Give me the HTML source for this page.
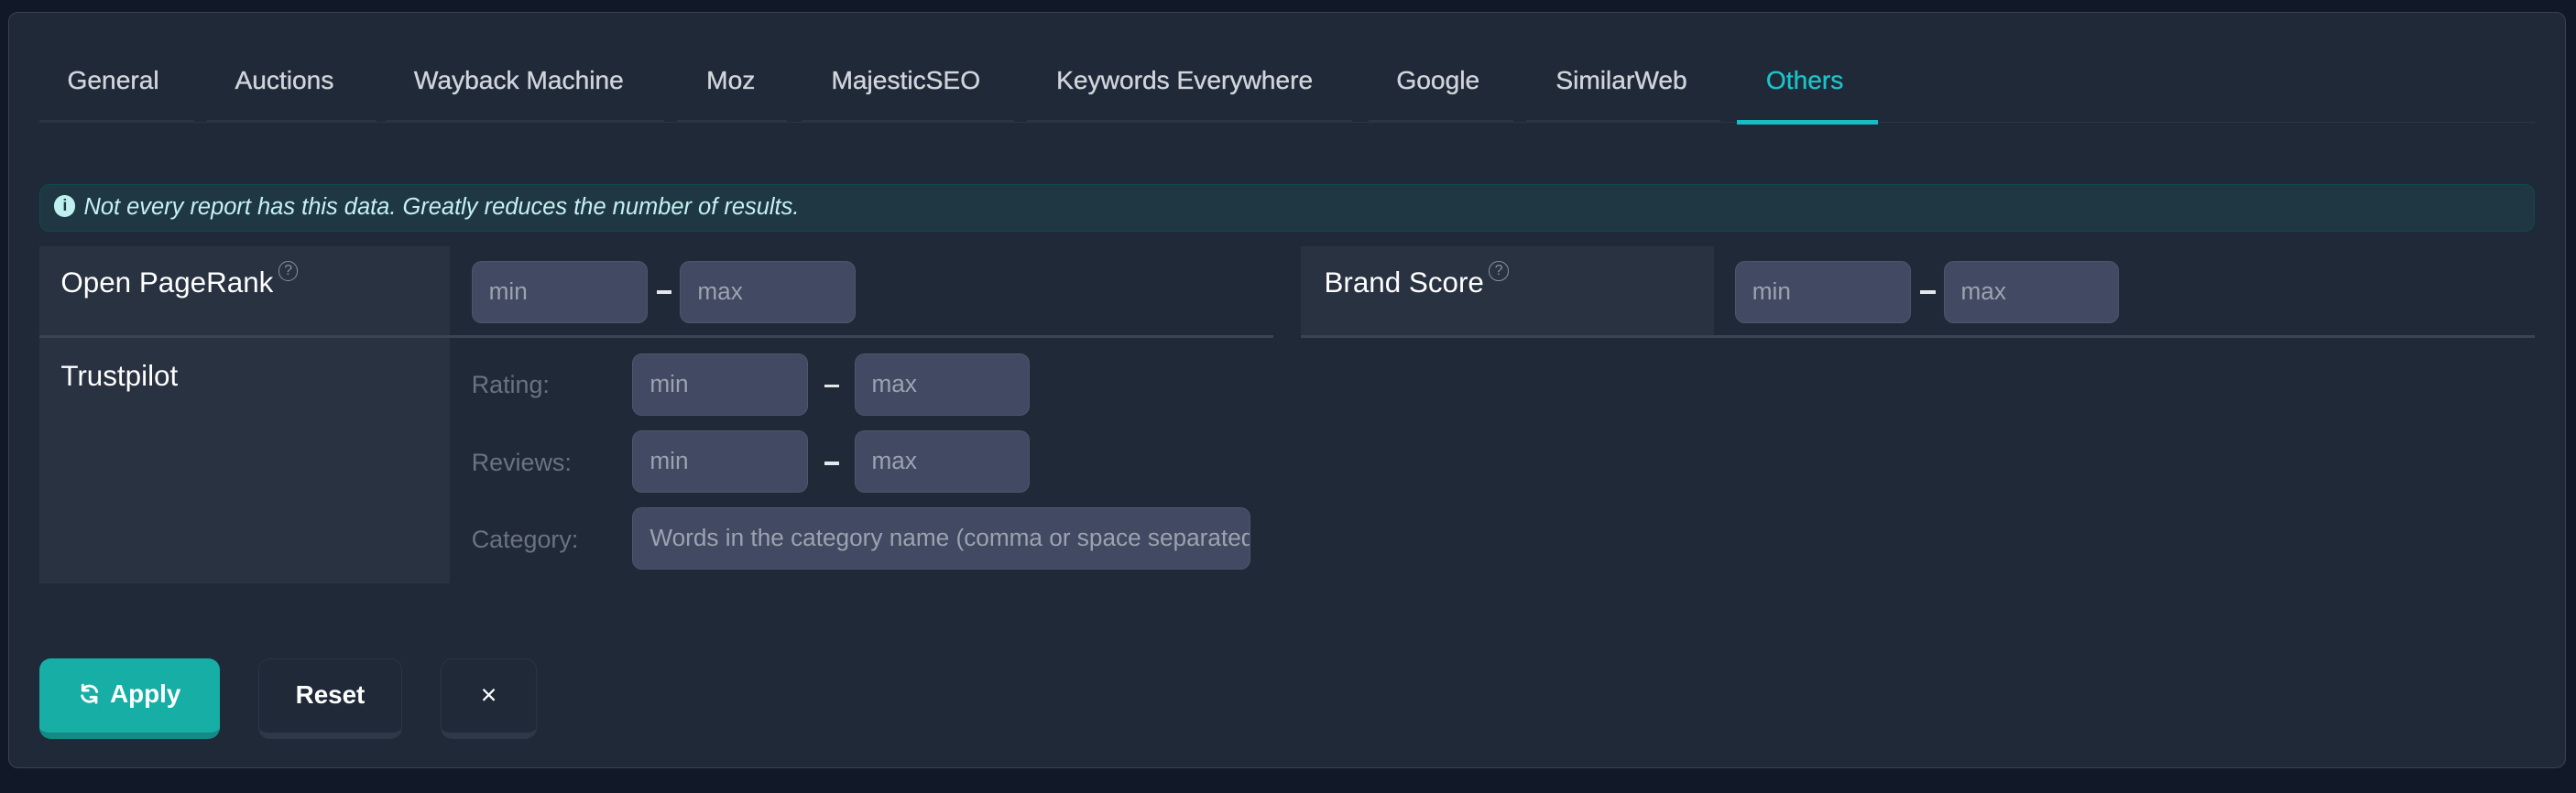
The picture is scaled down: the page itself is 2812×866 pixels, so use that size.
<!DOCTYPE html>
<html><head><meta charset="utf-8">
<style>
html,body{margin:0;padding:0;background:#111827;overflow:hidden}
body{zoom:1.7934;width:1568px;height:483px;position:relative;font-family:"Liberation Sans",sans-serif}
.a{position:absolute}
.panel{left:5px;top:7px;width:1557px;height:461px;background:#1f2937;border:1px solid #3b4257;border-radius:6px;box-sizing:border-box}
.tab{top:40px;font-size:15.7px;color:#d1d5db;white-space:nowrap;-webkit-text-stroke:0.2px #d1d5db}
.tabline{top:73px;height:2px;background:#2b3444}
.inp{background:#414963;border:1px solid #4e566b;border-radius:6px;box-sizing:border-box;color:#9ca3af;font-size:14.6px;padding-left:10px;line-height:36px;height:38px;white-space:nowrap;overflow:hidden}
.dash{width:9px;height:2px;background:#e5e7eb}
.cell{background:#283241}
.lbl{font-size:17.5px;color:#fff}
.q{display:inline-block;width:11px;height:11px;border:1px solid #8a909c;border-radius:50%;font-size:9px;line-height:11px;text-align:center;color:#8a909c;vertical-align:top;margin-left:3px;margin-top:-3px}
.sub{font-size:15px;color:#6b7280}
.hr{height:2px;background:#3d4451}
.btn{top:401px;height:49px;border-radius:7px;box-sizing:border-box;color:#fff;font-size:15.5px;font-weight:bold;text-align:center;line-height:44px}
</style></head><body>
<div class="a panel"></div>

<div class="a tabline" style="left:24px;width:1519px;top:74px;height:1px;background:#2d3544"></div>
<div class="a tabline" style="left:24px;width:94px"></div>
<div class="a tabline" style="left:126px;width:103px"></div>
<div class="a tabline" style="left:235px;width:169px"></div>
<div class="a tabline" style="left:412px;width:67px"></div>
<div class="a tabline" style="left:488px;width:129px"></div>
<div class="a tabline" style="left:625px;width:198px"></div>
<div class="a tabline" style="left:833px;width:88px"></div>
<div class="a tabline" style="left:929px;width:118px"></div>
<div class="a" style="left:1057px;top:73px;width:86px;height:3px;background:#17bcc4"></div>

<div class="a tab" style="left:41px">General</div>
<div class="a tab" style="left:143px">Auctions</div>
<div class="a tab" style="left:252px">Wayback Machine</div>
<div class="a tab" style="left:430px">Moz</div>
<div class="a tab" style="left:506px">MajesticSEO</div>
<div class="a tab" style="left:643px">Keywords Everywhere</div>
<div class="a tab" style="left:850px">Google</div>
<div class="a tab" style="left:947px">SimilarWeb</div>
<div class="a tab" style="left:1075px;color:#1cc2c9;-webkit-text-stroke:0.2px #1cc2c9">Others</div>

<div class="a" style="left:24px;top:112px;width:1519px;height:29px;background:#1f3743;border:1px solid #0f4a4a;border-radius:6px;box-sizing:border-box"></div>
<div class="a" style="left:33px;top:119px;width:13px;height:13px;border-radius:50%;background:#bff0f0;color:#1f3743;font-size:10px;font-weight:bold;text-align:center;line-height:13px">i</div>
<div class="a" style="left:51px;top:118px;font-size:14.2px;font-style:italic;color:#c4f1f1;white-space:nowrap">Not every report has this data. Greatly reduces the number of results.</div>

<!-- Row 1 -->
<div class="a cell" style="left:24px;top:150px;width:250px;height:55px"></div>
<div class="a lbl" style="left:37px;top:162px">Open PageRank<span class="q">?</span></div>
<div class="a inp" style="left:287px;top:159px;width:107px">min</div>
<div class="a dash" style="left:400px;top:177px"></div>
<div class="a inp" style="left:414px;top:159px;width:107px">max</div>
<div class="a hr" style="left:24px;top:204px;width:751px"></div>

<div class="a cell" style="left:792px;top:150px;width:251px;height:55px"></div>
<div class="a lbl" style="left:806px;top:162px">Brand Score<span class="q">?</span></div>
<div class="a inp" style="left:1056px;top:159px;width:107px">min</div>
<div class="a dash" style="left:1169px;top:177px"></div>
<div class="a inp" style="left:1183px;top:159px;width:107px">max</div>
<div class="a hr" style="left:792px;top:204px;width:751px"></div>

<!-- Trustpilot -->
<div class="a cell" style="left:24px;top:206px;width:250px;height:149px"></div>
<div class="a lbl" style="left:37px;top:219px">Trustpilot</div>
<div class="a sub" style="left:287px;top:226px">Rating:</div>
<div class="a inp" style="left:385px;top:215px;width:107px">min</div>
<div class="a dash" style="left:502px;top:234px"></div>
<div class="a inp" style="left:520px;top:215px;width:107px">max</div>
<div class="a sub" style="left:287px;top:273px">Reviews:</div>
<div class="a inp" style="left:385px;top:262px;width:107px">min</div>
<div class="a dash" style="left:502px;top:281px"></div>
<div class="a inp" style="left:520px;top:262px;width:107px">max</div>
<div class="a sub" style="left:287px;top:320px">Category:</div>
<div class="a inp" style="left:385px;top:309px;width:376px;padding-right:14px">Words in the category name (comma or space separated)</div>

<!-- Buttons -->
<div class="a btn" style="left:24px;width:110px;background:#17aea6;border-bottom:4px solid #128a85">
<svg width="13" height="13" viewBox="0 0 16 16" style="vertical-align:-1px;margin-right:6px"><path d="M13.5 6.5A5.7 5.7 0 0 0 3 5M2.5 9.5A5.7 5.7 0 0 0 13 11" stroke="#fff" stroke-width="2" fill="none" stroke-linecap="round"/><path d="M3 1.5V5.5H7M13 14.5V10.5H9" stroke="#fff" stroke-width="2" fill="none" stroke-linecap="round" stroke-linejoin="round"/></svg>Apply</div>
<div class="a btn" style="left:157px;width:88px;background:#1f2937;border:1px solid #2b3445;border-bottom:4px solid #2f3748">Reset</div>
<div class="a btn" style="left:268px;width:59px;background:#1f2937;border:1px solid #2b3445;border-bottom:4px solid #2f3748;font-weight:normal;font-size:17px">×</div>
</body></html>
